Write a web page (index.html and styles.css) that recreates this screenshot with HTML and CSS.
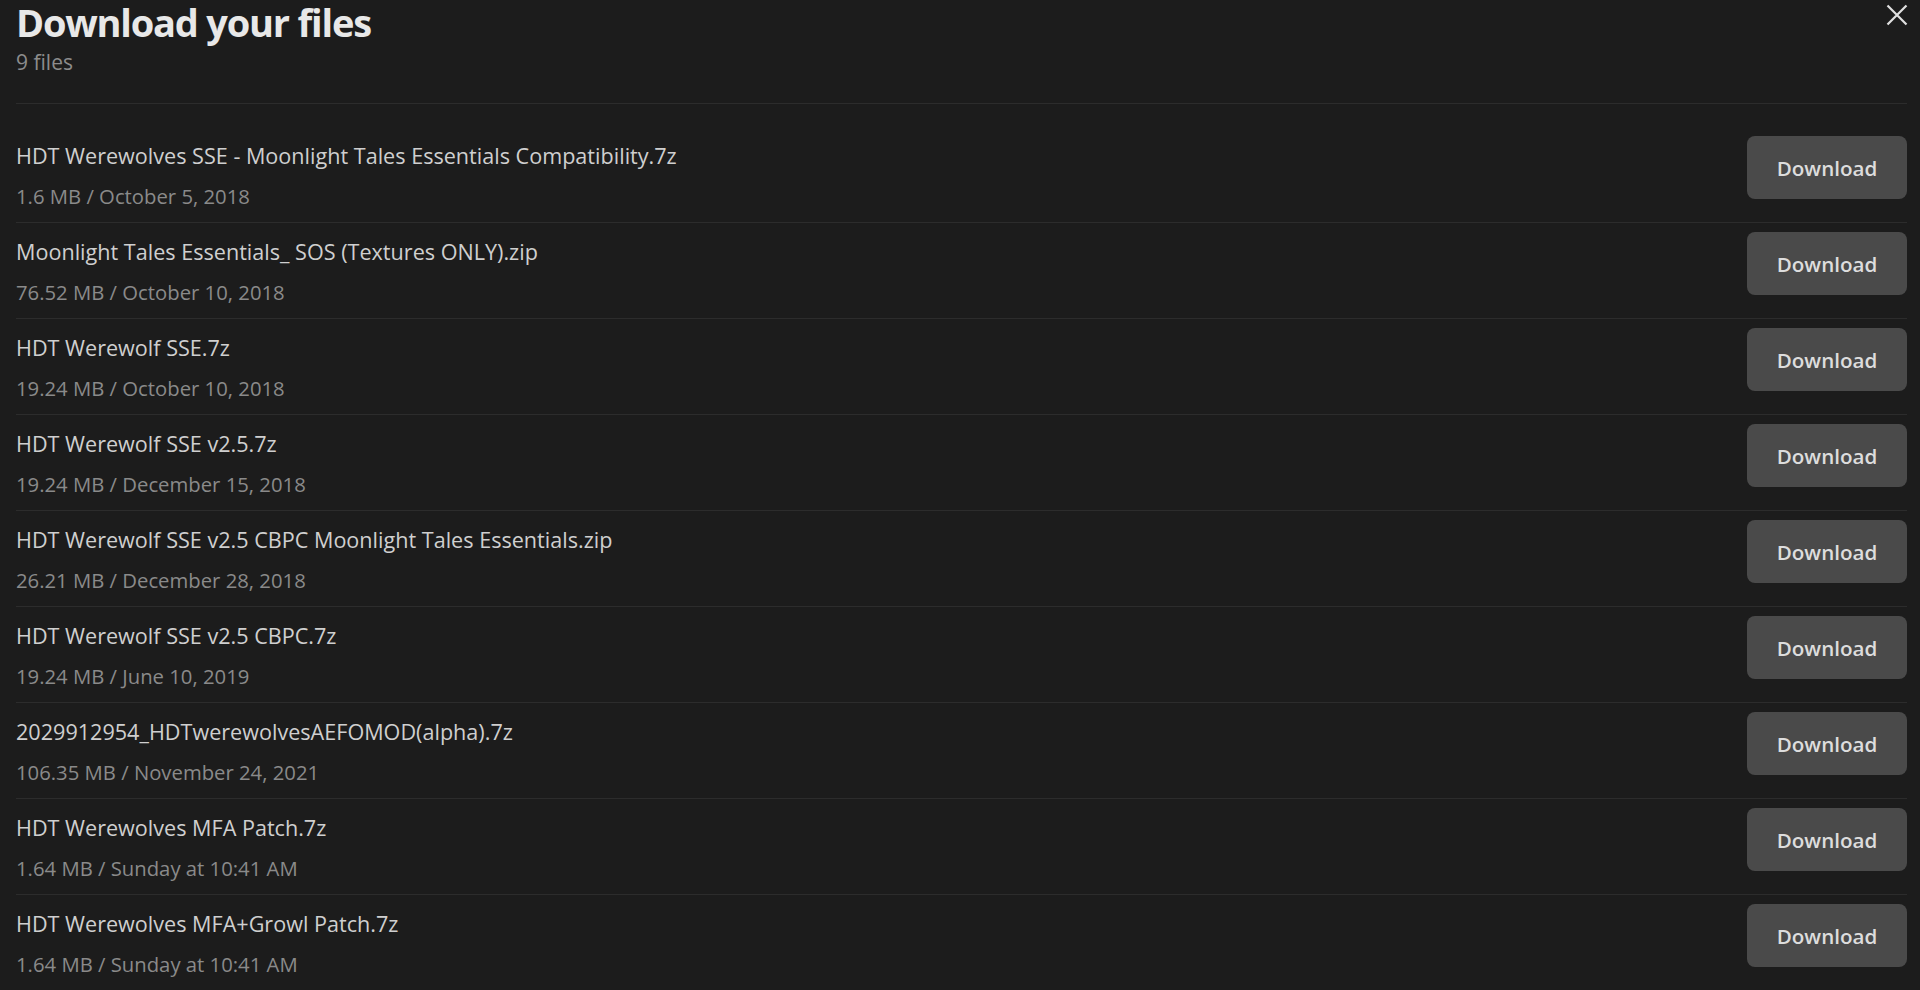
FILE: index.html
```html
<!DOCTYPE html>
<html>

<head>
    <title>Download your files</title>
    <link rel="stylesheet" href="styles.css">
</head>

<body>
    <div class="dialog">
        <button class="close" aria-label="Close">
            <svg width="22" height="22" viewBox="0 0 22 22">
                <path d="M1.5 1.5 L20.5 20.5 M20.5 1.5 L1.5 20.5" stroke="#e0e0e0" stroke-width="2.2" fill="none" />
            </svg>
        </button>

        <div class="header">
            <h1 class="title">Download your files</h1>
            <div class="count">9 files</div>
        </div>

        <div class="list">
            <div class="row">
                <div class="info">
                    <div class="name">HDT Werewolves SSE - Moonlight Tales Essentials Compatibility.7z</div>
                    <div class="meta">1.6 MB / October 5, 2018</div>
                </div>
                <button class="download">Download</button>
            </div>
            <div class="row">
                <div class="info">
                    <div class="name">Moonlight Tales Essentials_ SOS (Textures ONLY).zip</div>
                    <div class="meta">76.52 MB / October 10, 2018</div>
                </div>
                <button class="download">Download</button>
            </div>
            <div class="row">
                <div class="info">
                    <div class="name">HDT Werewolf SSE.7z</div>
                    <div class="meta">19.24 MB / October 10, 2018</div>
                </div>
                <button class="download">Download</button>
            </div>
            <div class="row">
                <div class="info">
                    <div class="name">HDT Werewolf SSE v2.5.7z</div>
                    <div class="meta">19.24 MB / December 15, 2018</div>
                </div>
                <button class="download">Download</button>
            </div>
            <div class="row">
                <div class="info">
                    <div class="name">HDT Werewolf SSE v2.5 CBPC Moonlight Tales Essentials.zip</div>
                    <div class="meta">26.21 MB / December 28, 2018</div>
                </div>
                <button class="download">Download</button>
            </div>
            <div class="row">
                <div class="info">
                    <div class="name">HDT Werewolf SSE v2.5 CBPC.7z</div>
                    <div class="meta">19.24 MB / June 10, 2019</div>
                </div>
                <button class="download">Download</button>
            </div>
            <div class="row">
                <div class="info">
                    <div class="name">2029912954_HDTwerewolvesAEFOMOD(alpha).7z</div>
                    <div class="meta">106.35 MB / November 24, 2021</div>
                </div>
                <button class="download">Download</button>
            </div>
            <div class="row">
                <div class="info">
                    <div class="name">HDT Werewolves MFA Patch.7z</div>
                    <div class="meta">1.64 MB / Sunday at 10:41 AM</div>
                </div>
                <button class="download">Download</button>
            </div>
            <div class="row">
                <div class="info">
                    <div class="name">HDT Werewolves MFA+Growl Patch.7z</div>
                    <div class="meta">1.64 MB / Sunday at 10:41 AM</div>
                </div>
                <button class="download">Download</button>
            </div>
        </div>
    </div>
</body>

</html>
```

FILE: styles.css
```css
html,
body {
    margin: 0;
    background-color: #1c1c1c;
    overflow: hidden;
}

body {
    font-family: "Open Sans", "Noto Sans", sans-serif;
    color: #cccccc;
}

.dialog {
    position: relative;
    padding: 0 13px 0 16px;
}

.close {
    position: absolute;
    top: 4px;
    right: 12px;
    width: 22px;
    height: 22px;
    padding: 0;
    border: none;
    background: none;
    cursor: pointer;
}

.close svg {
    display: block;
}

.header {
    padding-bottom: 27px;
    border-bottom: 1px solid #2c2c2c;
}

.title {
    margin: 0;
    font-size: 38px;
    line-height: 44px;
    font-weight: 700;
    color: #e8e8e8;
    letter-spacing: -1.2px;
}

.count {
    margin-top: 4px;
    font-size: 21px;
    line-height: 28px;
    color: #8c8c8c;
}

.list {
    margin-top: 23px;
}

.row {
    display: flex;
    align-items: flex-start;
    justify-content: space-between;
    box-sizing: border-box;
    height: 96px;
    padding-top: 9px;
    border-top: 1px solid #2c2c2c;
}

.row:first-child {
    height: 95px;
    border-top: none;
}

.info {
    padding-top: 4px;
}

.name {
    font-size: 21.6px;
    line-height: 32px;
    color: #cfcfcf;
}

.meta {
    margin-top: 8px;
    font-size: 20.3px;
    line-height: 32px;
    color: #8a8a8a;
}

.download {
    width: 160px;
    height: 63px;
    border: none;
    border-radius: 8px;
    background-color: #4a4a4a;
    color: #dddddd;
    font-family: "Open Sans", "Noto Sans", sans-serif;
    font-size: 20.6px;
    font-weight: 600;
    cursor: pointer;
}
```
